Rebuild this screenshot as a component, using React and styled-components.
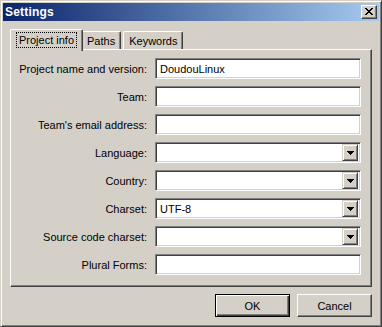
import React from 'react';
import styled, { createGlobalStyle } from 'styled-components';

const GlobalStyle = createGlobalStyle`
  html, body {
    margin: 0;
    padding: 0;
    background: #d4d0c8;
  }
  * {
    box-sizing: border-box;
  }
`;

const Window = styled.div`
  width: 382px;
  height: 327px;
  background: #d4d0c8;
  border: 1px solid;
  border-color: #d4d0c8 #404040 #404040 #d4d0c8;
  box-shadow: inset 1px 1px #fff, inset -1px -1px #808080;
  padding: 2px;
  display: flex;
  flex-direction: column;
  font-family: "Liberation Sans", Arial, sans-serif;
  font-size: 11px;
  color: #000;
`;

const TitleBar = styled.div`
  height: 18px;
  flex: none;
  display: flex;
  align-items: center;
  justify-content: space-between;
  padding: 0 2px 0 2px;
  background: linear-gradient(to right, #0a246a, #a6caf0);
`;

const Title = styled.span`
  color: #fff;
  font-weight: bold;
  font-size: 12px;
  letter-spacing: 0.2px;
`;

const CloseButton = styled.div`
  width: 16px;
  height: 14px;
  background: #d4d0c8;
  border: 1px solid;
  border-color: #fff #404040 #404040 #fff;
  box-shadow: inset -1px -1px #808080;
  display: flex;
  align-items: center;
  justify-content: center;
  padding: 0 1px 1px 0;
`;

const Body = styled.div`
  flex: 1;
  display: flex;
  flex-direction: column;
  padding: 8px 7px 7px 7px;
`;

const TabRow = styled.div`
  height: 20px;
  display: flex;
  align-items: flex-end;
  padding-left: 2px;
`;

const Tab = styled.div`
  position: relative;
  display: flex;
  align-items: center;
  justify-content: center;
  background: #d4d0c8;
  border-left: 1px solid #fff;
  border-top: 1px solid #fff;
  border-right: 1px solid #404040;
  border-radius: 2px 2px 0 0;
  box-shadow: inset -1px 0 #808080;
  height: ${p => (p.$active ? '22px' : '18px')};
  padding: ${p => (p.$active ? '0 6px 2px 6px' : '1px 5px 0 5px')};
  margin: ${p => (p.$active ? '0 -2px -2px -2px' : '0 2px 0 0')};
  z-index: ${p => (p.$active ? 1 : 0)};
`;

const FocusLabel = styled.span`
  outline: 1px dotted #000;
  padding: 1px 2px 1px 2px;
`;

const Panel = styled.div`
  height: 238px;
  flex: none;
  border-left: 1px solid #fff;
  border-top: 1px solid #fff;
  border-right: 1px solid #404040;
  border-bottom: 1px solid #404040;
  box-shadow: inset -1px -1px #808080;
  padding: 8px 9px 0 0;
  display: grid;
  grid-template-columns: 136px 206px;
  grid-auto-rows: 21px;
  column-gap: 8px;
  row-gap: 7px;
  align-content: start;
`;

const Label = styled.label`
  text-align: right;
  align-self: center;
  white-space: nowrap;
  padding-top: 1px;
`;

const Field = styled.div`
  height: 21px;
  background: #fff;
  border: 1px solid;
  border-color: #808080 #fff #fff #808080;
  box-shadow: inset 1px 1px #404040, inset -1px -1px #d4d0c8;
  display: flex;
  align-items: center;
  padding: 2px 2px 2px 4px;
`;

const FieldText = styled.span`
  flex: 1;
  padding-top: 1px;
`;

const DropButton = styled.div`
  width: 16px;
  height: 17px;
  flex: none;
  background: #d4d0c8;
  border: 1px solid;
  border-color: #d4d0c8 #404040 #404040 #d4d0c8;
  box-shadow: inset 1px 1px #fff, inset -1px -1px #808080;
  display: flex;
  align-items: center;
  justify-content: center;
`;

const ButtonRow = styled.div`
  display: flex;
  justify-content: flex-end;
  gap: 7px;
  margin-top: 7px;
`;

const Button = styled.button`
  width: 75px;
  height: 23px;
  font-family: "Liberation Sans", Arial, sans-serif;
  font-size: 11px;
  color: #000;
  background: #d4d0c8;
  padding: 0;
  border: 1px solid;
  border-color: ${p => (p.$default ? '#000' : '#fff #404040 #404040 #fff')};
  box-shadow: ${p =>
    p.$default
      ? 'inset 1px 1px #fff, inset -1px -1px #404040, inset -2px -2px #808080'
      : 'inset -1px -1px #808080'};
`;

const CloseGlyph = () => (
  <svg width="8" height="7" viewBox="0 0 8 7" shapeRendering="crispEdges">
    <path
      fill="#000"
      d="M0 0h2v1h-2zM6 0h2v1h-2zM1 1h2v1h-2zM5 1h2v1h-2zM2 2h4v1h-4zM3 3h2v1h-2zM2 4h4v1h-4zM1 5h2v1h-2zM5 5h2v1h-2zM0 6h2v1h-2zM6 6h2v1h-2z"
    />
  </svg>
);

const ArrowGlyph = () => (
  <svg width="7" height="4" viewBox="0 0 7 4" shapeRendering="crispEdges">
    <path fill="#000" d="M0 0h7v1h-7zM1 1h5v1h-5zM2 2h3v1h-3zM3 3h1v1h-1z" />
  </svg>
);

const fields = [
  { label: 'Project name and version:', value: 'DoudouLinux' },
  { label: 'Team:' },
  { label: "Team's email address:" },
  { label: 'Language:', combo: true },
  { label: 'Country:', combo: true },
  { label: 'Charset:', value: 'UTF-8', combo: true },
  { label: 'Source code charset:', combo: true },
  { label: 'Plural Forms:' },
];

const App = () => {
  return (
    <>
      <GlobalStyle />
      <Window>
        <TitleBar>
          <Title>Settings</Title>
          <CloseButton>
            <CloseGlyph />
          </CloseButton>
        </TitleBar>
        <Body>
          <TabRow>
            <Tab $active>
              <FocusLabel>Project info</FocusLabel>
            </Tab>
            <Tab>Paths</Tab>
            <Tab>Keywords</Tab>
          </TabRow>
          <Panel>
            {fields.map(f => (
              <React.Fragment key={f.label}>
                <Label>{f.label}</Label>
                <Field>
                  <FieldText>{f.value}</FieldText>
                  {f.combo && (
                    <DropButton>
                      <ArrowGlyph />
                    </DropButton>
                  )}
                </Field>
              </React.Fragment>
            ))}
          </Panel>
          <ButtonRow>
            <Button $default>OK</Button>
            <Button>Cancel</Button>
          </ButtonRow>
        </Body>
      </Window>
    </>
  );
};

export default App;
